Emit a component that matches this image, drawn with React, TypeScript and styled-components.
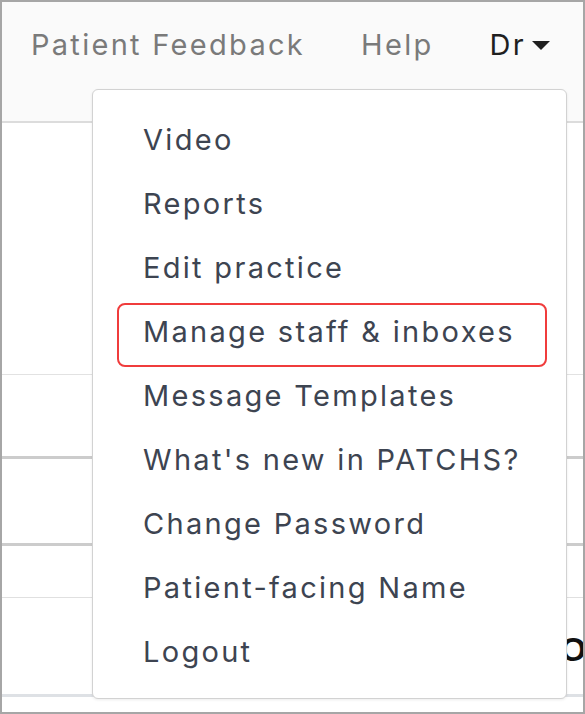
import { createGlobalStyle, styled } from "styled-components";

const GlobalStyle = createGlobalStyle`
  html, body {
    margin: 0;
    padding: 0;
    background: #ffffff;
  }
  body {
    font-family: Inter, "Open Sans", sans-serif;
  }
`;

const Frame = styled.div`
  position: relative;
  width: 585px;
  height: 714px;
  box-sizing: border-box;
  border: 2px solid #a6a6a6;
  overflow: hidden;
  background: #ffffff;
`;

const Header = styled.header`
  height: 121px;
  box-sizing: border-box;
  background: #fafafa;
  border-bottom: 2px solid #dcdcdc;
  display: flex;
  justify-content: flex-end;
  align-items: flex-start;
  padding: 25px 33px 0 0;
  gap: 56px;
`;

const NavLink = styled.a<{ $active?: boolean }>`
  font-size: 29px;
  line-height: 36px;
  letter-spacing: 2.3px;
  color: ${(p) => (p.$active ? "#1f1f1f" : "#7a7a7a")};
  text-decoration: none;
  display: flex;
  align-items: center;
  gap: 6px;
`;

const Caret = styled.span`
  width: 0;
  height: 0;
  border-left: 9.5px solid transparent;
  border-right: 9.5px solid transparent;
  border-top: 9px solid #1f1f1f;
  margin-top: 1px;
`;

const Row = styled.div<{ $h: number; $line: number; $color: string }>`
  height: ${(p) => p.$h}px;
  box-sizing: border-box;
  border-bottom: ${(p) => p.$line}px solid ${(p) => p.$color};
  display: flex;
  justify-content: flex-end;
  align-items: center;
`;

const RowTitle = styled.span`
  font-family: "Liberation Sans", Arial, sans-serif;
  font-weight: 700;
  font-size: 34px;
  color: #111;
  margin-right: -26px;
  padding-top: 6px;
`;

const Menu = styled.ul`
  position: absolute;
  top: 87px;
  left: 90px;
  width: 475px;
  height: 610px;
  box-sizing: border-box;
  margin: 0;
  padding: 21px 18px 0 24px;
  list-style: none;
  background: #ffffff;
  border: 1px solid #d2d2d2;
  border-radius: 6px;
  box-shadow: 0 1px 3px rgba(0, 0, 0, 0.08);
  display: flex;
  flex-direction: column;
`;

const MenuItem = styled.li<{ $highlight?: boolean }>`
  height: 64px;
  box-sizing: border-box;
  display: flex;
  align-items: center;
  padding: 0 0 8px 24px;
  width: 430px;
  font-size: 29px;
  letter-spacing: 2.3px;
  color: #3d4451;
  border: 2px solid ${(p) => (p.$highlight ? "#f03c3c" : "transparent")};
  border-radius: 8px;
  white-space: nowrap;
`;

const items = [
  "Video",
  "Reports",
  "Edit practice",
  "Manage staff & inboxes",
  "Message Templates",
  "What's new in PATCHS?",
  "Change Password",
  "Patient-facing Name",
  "Logout",
];

export default function App() {
  return (
    <>
      <GlobalStyle />
      <Frame>
        <Header>
          <NavLink>Patient Feedback</NavLink>
          <NavLink>Help</NavLink>
          <NavLink $active>
            Dr <Caret />
          </NavLink>
        </Header>
        <Row $h={252} $line={1} $color="#e2e2e2" />
        <Row $h={84} $line={3} $color="#cccccc" />
        <Row $h={87} $line={3} $color="#cccccc" />
        <Row $h={52} $line={1} $color="#e0e0e0" />
        <Row $h={99} $line={3} $color="#dee1e5">
          <RowTitle>OV</RowTitle>
        </Row>
        <Menu>
          {items.map((label) => (
            <MenuItem key={label} $highlight={label === "Manage staff & inboxes"}>
              {label}
            </MenuItem>
          ))}
        </Menu>
      </Frame>
    </>
  );
}
